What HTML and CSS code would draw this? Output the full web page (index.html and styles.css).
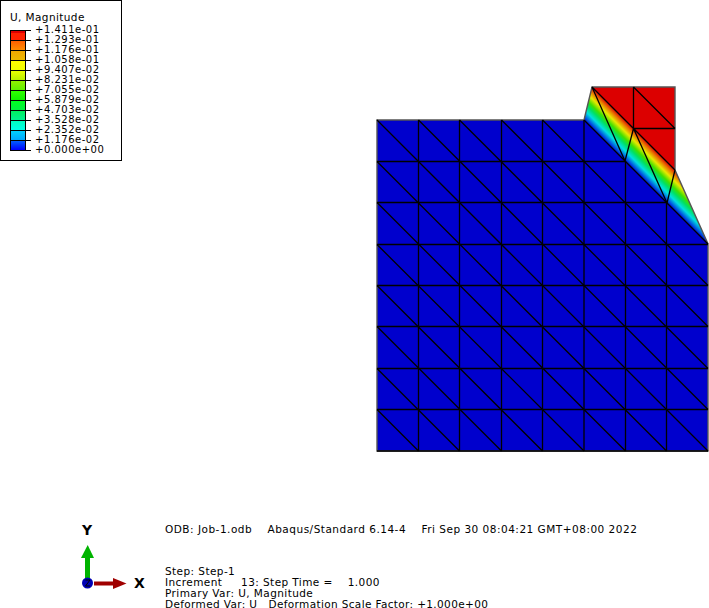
FILE: index.html
```html
<!DOCTYPE html>
<html lang="en">
<head>
<meta charset="utf-8">
<title>U, Magnitude</title>
<link rel="stylesheet" href="styles.css">
</head>
<body>
<main class="viewport">
  <section class="legend">
    <div class="legend-title">U, Magnitude</div>
    <ul class="legend-scale">
      <li class="legend-row"><span class="swatch s1"></span><span class="tick"></span><span class="value">+1.411e-01</span></li>
      <li class="legend-row"><span class="swatch s2"></span><span class="tick"></span><span class="value">+1.293e-01</span></li>
      <li class="legend-row"><span class="swatch s3"></span><span class="tick"></span><span class="value">+1.176e-01</span></li>
      <li class="legend-row"><span class="swatch s4"></span><span class="tick"></span><span class="value">+1.058e-01</span></li>
      <li class="legend-row"><span class="swatch s5"></span><span class="tick"></span><span class="value">+9.407e-02</span></li>
      <li class="legend-row"><span class="swatch s6"></span><span class="tick"></span><span class="value">+8.231e-02</span></li>
      <li class="legend-row"><span class="swatch s7"></span><span class="tick"></span><span class="value">+7.055e-02</span></li>
      <li class="legend-row"><span class="swatch s8"></span><span class="tick"></span><span class="value">+5.879e-02</span></li>
      <li class="legend-row"><span class="swatch s9"></span><span class="tick"></span><span class="value">+4.703e-02</span></li>
      <li class="legend-row"><span class="swatch s10"></span><span class="tick"></span><span class="value">+3.528e-02</span></li>
      <li class="legend-row"><span class="swatch s11"></span><span class="tick"></span><span class="value">+2.352e-02</span></li>
      <li class="legend-row"><span class="swatch s12"></span><span class="tick"></span><span class="value">+1.176e-02</span></li>
      <li class="legend-row last"><span class="tick"></span><span class="value">+0.000e+00</span></li>
    </ul>
  </section>

  <svg class="mesh" width="709" height="608" viewBox="0 0 709 608" aria-label="Deformed mesh contour">
    <defs>
      <linearGradient id="contour" gradientUnits="userSpaceOnUse" x1="604" y1="140" x2="624.5" y2="119.5">
        <stop offset="0" stop-color="#0000cd"/>
        <stop offset="0.08" stop-color="#0050e0"/>
        <stop offset="0.25" stop-color="#00e0e0"/>
        <stop offset="0.42" stop-color="#00e060"/>
        <stop offset="0.55" stop-color="#40e000"/>
        <stop offset="0.72" stop-color="#e8e800"/>
        <stop offset="0.88" stop-color="#e87000"/>
        <stop offset="1" stop-color="#dc0000"/>
      </linearGradient>
    </defs>
    <path class="fill-blue" d="M377 120H584L708 244V451H377Z"/>
    <path class="fill-red" d="M592 87H675V170Z"/>
    <path class="fill-band" d="M584 120L592 87L675 170L708 244Z"/>
    <path class="edge-soft" d="M377 451V120H584L592 87H675V170L708 244V451Z"/>
    <path class="edge" d="M418.500 120V451M459.500 120V451M501.500 120V451M542.500 120V451M584 120V451M625.500 161V451M666.500 203V451M377 161.500H625M377 202.500H667M377 244.500H708M377 285.500H708M377 326.500H708M377 368.500H708M377 409.500H708M377 451H708"/>
    <path class="edge" d="M377 120L708 451M418.500 120L708 409.500M459.500 120L708 368.500M501.500 120L708 326.500M542.500 120L708 285.500M584 120L708 244M377 161.500L666.500 451M377 202.500L625.500 451M377 244.500L584 451M377 285.500L542.500 451M377 326.500L501.500 451M377 368.500L459.500 451M377 409.500L418.500 451"/>
    <path class="edge" d="M592 87L675 170M592 87L625 161L633.500 128.500L667 203L675 170M633.500 87V128.500M633.500 128.500H675M633.500 87L675 128.500"/>
  </svg>

  <svg class="triad" width="60" height="60" viewBox="0 0 60 60" aria-hidden="true">
    <rect class="axis-y" x="11" y="15" width="5" height="22"/>
    <path class="axis-y" d="M13.700 3L20 16H7Z"/>
    <rect class="axis-x" x="20" y="39.500" width="20" height="4"/>
    <path class="axis-x" d="M52.500 41.500L39 36V47Z"/>
    <circle class="axis-z" cx="13.500" cy="41" r="5.500"/>
    <path class="axis-z-mark" d="M11.500 38H16L11.500 44H16"/>
  </svg>
  <span class="axis-label label-y">Y</span>
  <span class="axis-label label-x">X</span>

  <div class="info info-top">ODB: Job-1.odb&nbsp;&nbsp;&nbsp; Abaqus/Standard 6.14-4&nbsp;&nbsp;&nbsp; Fri Sep 30 08:04:21 GMT+08:00 2022</div>
  <div class="info info-bottom">
    <div>Step: Step-1</div>
    <div>Increment&nbsp;&nbsp;&nbsp;&nbsp; 13: Step Time =&nbsp;&nbsp;&nbsp; 1.000</div>
    <div>Primary Var: U, Magnitude</div>
    <div class="info-last">Deformed Var: U&nbsp;&nbsp; Deformation Scale Factor: +1.000e+00</div>
  </div>
</main>
</body>
</html>
```
FILE: styles.css
```css
* { box-sizing: border-box; }
html, body { margin: 0; padding: 0; background: #fff; }
body { font-family: "DejaVu Sans", Verdana, sans-serif; font-size: 10.5px; color: #000; }

.viewport { position: relative; width: 709px; height: 608px; overflow: hidden; }

.legend {
  position: absolute; left: 0; top: 0;
  width: 122px; height: 161px;
  border: 1px solid #000;
  padding: 10px 0 0 9px;
  background: #fff;
}
.legend-title { line-height: 12px; height: 19px; letter-spacing: 0.4px; }
.legend-scale { list-style: none; margin: 0; padding: 0; }
.legend-row { display: flex; align-items: flex-start; height: 10px; position: relative; }
.swatch { width: 16px; height: 10px; border: 1px solid #000; border-bottom: 0; flex: none; }
.last { padding-left: 16px; }
.last::before { content: ""; position: absolute; left: 0; top: 0; width: 16px; height: 1px; background: #000; }
.tick { width: 5px; height: 1px; background: #000; flex: none; }
.value { margin-left: 4px; font-size: 10px; line-height: 10px; margin-top: -5px; white-space: nowrap; height: 10px; letter-spacing: 0.5px; }

.s1 { background: linear-gradient(#dd0000 0 2px, #ff2000 2px); }
.s2 { background: linear-gradient(#ff6000, #ff8c00); }
.s3 { background: linear-gradient(#f0a800, #ecb800); }
.s4 { background: linear-gradient(#ffff00, #f0ff00); }
.s5 { background: linear-gradient(#e8ff00, #b8f000); }
.s6 { background: linear-gradient(#90f000, #60f000); }
.s7 { background: linear-gradient(#30ff00, #10f000); }
.s8 { background: linear-gradient(#00ff20, #00f040); }
.s9 { background: linear-gradient(#00f060, #00f090); }
.s10 { background: linear-gradient(#00ffc0, #00ffe8); }
.s11 { background: linear-gradient(#00d0ff, #00a8ff); }
.s12 { background: linear-gradient(#0060ff, #0000ff); }

.mesh { position: absolute; left: 0; top: 0; }
.fill-blue { fill: #0000cd; }
.fill-red { fill: #dc0000; }
.fill-band { fill: url(#contour); }
.edge { fill: none; stroke: #000; stroke-width: 1.3; }
.edge-soft { fill: none; stroke: #555; stroke-width: 1.4; }

.triad { position: absolute; left: 74px; top: 542px; }
.axis-y { fill: #00b400; }
.axis-x { fill: #a00000; }
.axis-z { fill: #0000b4; }
.axis-z-mark { stroke: #000; stroke-width: 1; fill: none; }
.axis-label { position: absolute; font-weight: 700; font-size: 14px; line-height: 14px; }
.label-y { left: 82px; top: 523px; }
.label-x { left: 134px; top: 576px; }

.info { position: absolute; left: 165px; white-space: nowrap; line-height: 11px; font-size: 10.5px; letter-spacing: 0.42px; }
.info-top { top: 524px; letter-spacing: 0.5px; }
.info-bottom { top: 566px; }
.info-last { height: 9px; letter-spacing: 0.36px; }
```
